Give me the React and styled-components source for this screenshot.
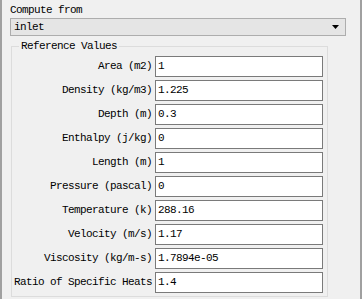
import React from "react";
import styled, { createGlobalStyle } from "styled-components";

const GlobalStyle = createGlobalStyle`
  html, body {
    margin: 0;
    padding: 0;
    background: #f0f0f0;
  }
  body {
    font-family: "Liberation Mono", "DejaVu Sans Mono", monospace;
    font-size: 11px;
    letter-spacing: -0.6px;
    color: #000;
  }
`;

const Panel = styled.div`
  width: 362px;
  height: 299px;
  box-sizing: border-box;
  border-left: 2px solid #a0a0a0;
  border-right: 2px solid #a0a0a0;
  padding: 2px 14px 0 8px;
  display: flex;
  flex-direction: column;
`;

const Caption = styled.div`
  height: 16px;
  line-height: 16px;
`;

const Combo = styled.div`
  height: 18px;
  box-sizing: border-box;
  border: 1px solid #adadad;
  background: #e5e5e5;
  display: flex;
  align-items: center;
  justify-content: space-between;
  padding: 0 6px 0 3px;
`;

const Arrow = styled.svg`
  width: 7px;
  height: 4px;
  display: block;
`;

const Group = styled.div`
  position: relative;
  margin: 10px 0 0 1px;
  width: 317px;
  height: 251px;
  box-sizing: border-box;
  border: 1px solid #dcdcdc;
  padding: 9px 4px 3px 0;
`;

const Title = styled.div`
  position: absolute;
  top: -8px;
  left: 7px;
  padding: 0 2px;
  line-height: 14px;
  background: #f0f0f0;
`;

const Form = styled.div`
  display: grid;
  grid-template-columns: 140px 168px;
  column-gap: 3px;
  row-gap: 3px;
  grid-auto-rows: 21px;
`;

const Label = styled.div`
  text-align: right;
  line-height: 21px;
  white-space: nowrap;
`;

const Field = styled.div`
  box-sizing: border-box;
  border: 1px solid #7a7a7a;
  background: #fff;
  line-height: 19px;
  padding-left: 2px;
  white-space: nowrap;
`;

const rows = [
  ["Area (m2)", "1"],
  ["Density (kg/m3)", "1.225"],
  ["Depth (m)", "0.3"],
  ["Enthalpy (j/kg)", "0"],
  ["Length (m)", "1"],
  ["Pressure (pascal)", "0"],
  ["Temperature (k)", "288.16"],
  ["Velocity (m/s)", "1.17"],
  ["Viscosity (kg/m-s)", "1.7894e-05"],
  ["Ratio of Specific Heats", "1.4"],
];

export default function App() {
  return (
    <>
      <GlobalStyle />
      <Panel>
        <Caption>Compute from</Caption>
        <Combo>
          <span>inlet</span>
          <Arrow viewBox="0 0 7 4">
            <path d="M0 0H7L3.5 4Z" fill="#000" />
          </Arrow>
        </Combo>
        <Group>
          <Title>Reference Values</Title>
          <Form>
            {rows.map(([label, value]) => (
              <React.Fragment key={label}>
                <Label>{label}</Label>
                <Field>{value}</Field>
              </React.Fragment>
            ))}
          </Form>
        </Group>
      </Panel>
    </>
  );
}
